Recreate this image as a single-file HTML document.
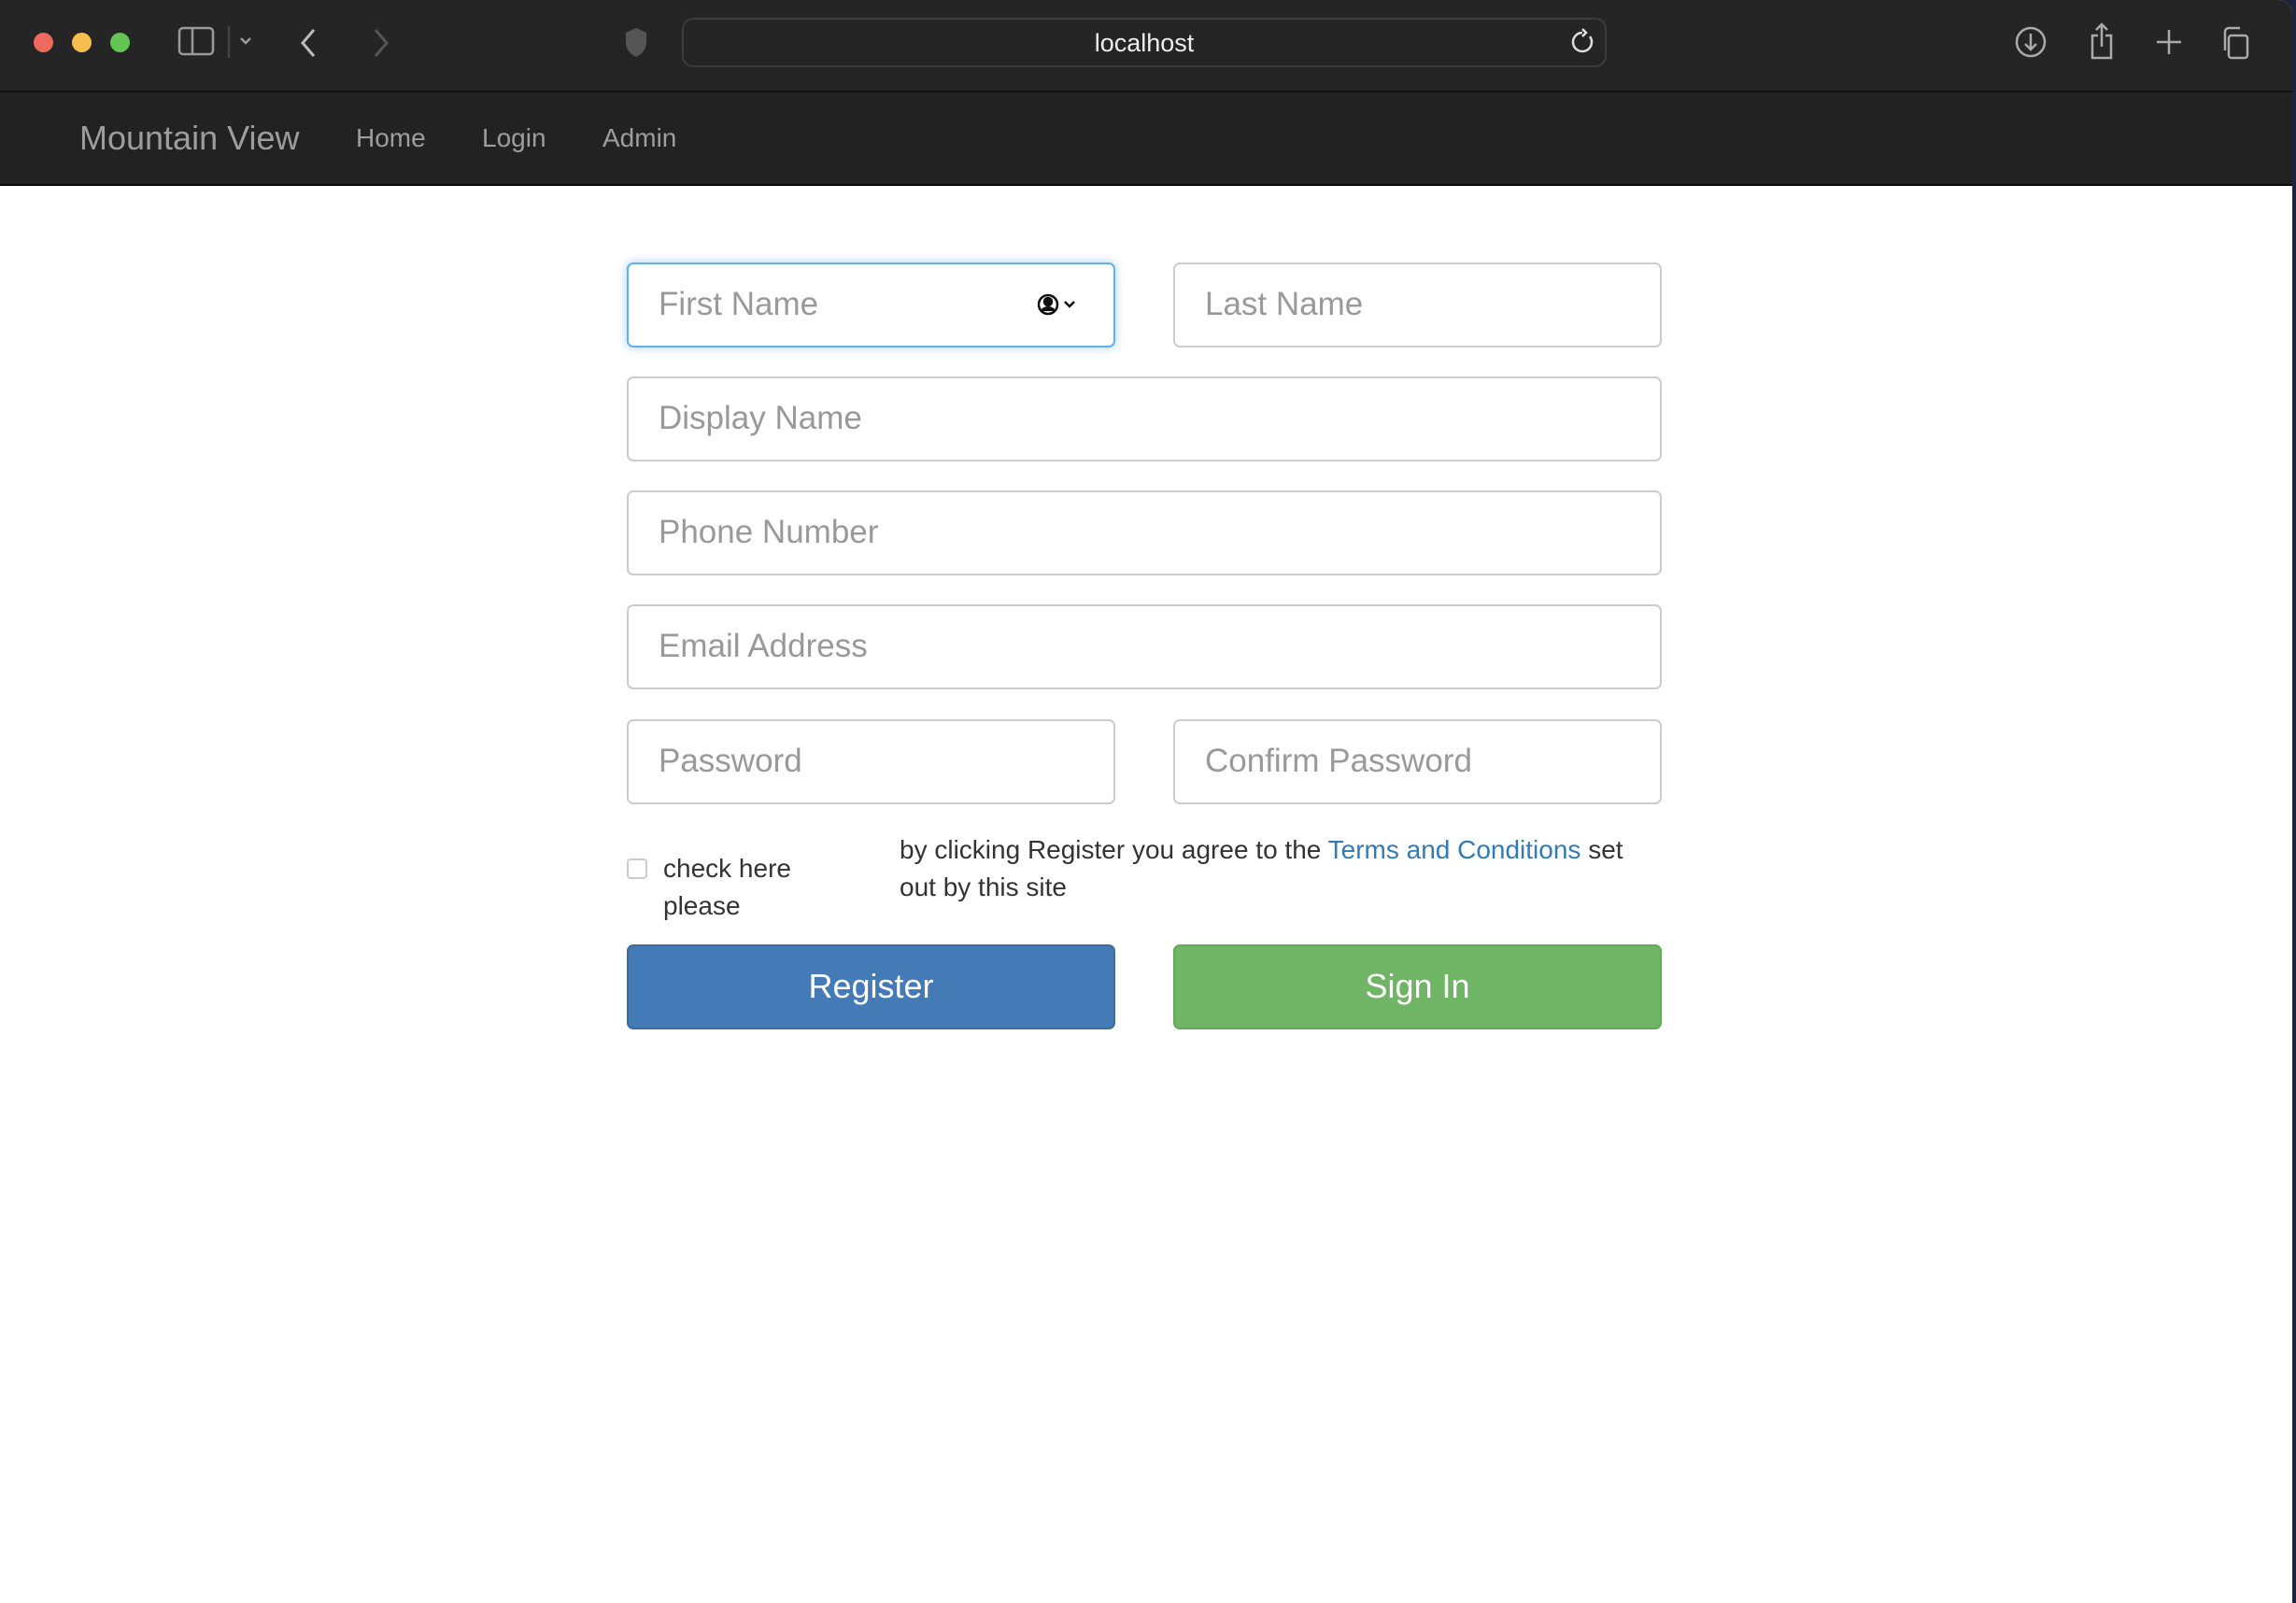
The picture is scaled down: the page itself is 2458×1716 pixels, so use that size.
<!DOCTYPE html>
<html><head><meta charset="utf-8"><style>
*{box-sizing:border-box;margin:0;padding:0}
body{width:2458px;height:1716px;overflow:hidden;background:#1b2540;font-family:"Liberation Sans",Arial,sans-serif;position:relative}
.win{position:absolute;left:0;top:0;width:2454px;height:1716px;background:#fff;overflow:hidden;border-top-right-radius:14px}
.tb{position:absolute;left:0;top:0;width:100%;height:99px;background:#252525;border-bottom:2px solid #111}
.dot{position:absolute;top:35px;width:21px;height:21px;border-radius:50%}
.url{position:absolute;left:730px;top:19px;width:990px;height:53px;border:2px solid #3c3c3c;border-radius:12px;color:#eee;font-size:27px;text-align:center;line-height:51px}
.nav{position:absolute;left:0;top:99px;width:100%;height:100px;background:#222;border-bottom:2px solid #080808}
.nav span{position:absolute;top:0;line-height:98px;color:#9d9d9d;font-size:28px}
.f{position:absolute;height:91px;border:2px solid #ccc;border-radius:7px;color:#999;font-size:35px;line-height:85px;padding-left:32px}
.btn{position:absolute;top:1011px;height:91px;width:523px;border-radius:7px;color:#fff;font-size:36px;text-align:center;line-height:85px}
.t{position:absolute;font-size:28px;color:#333;line-height:40px}
</style></head><body>
<div class="win">
<div class="tb">
<div class="dot" style="left:36px;background:#ee6a5f"></div>
<div class="dot" style="left:77px;background:#f5be4f"></div>
<div class="dot" style="left:118px;background:#62c554"></div>
<svg style="position:absolute;left:190px;top:28px" width="90" height="36" fill="none" stroke="#999" stroke-width="2.5"><rect x="2" y="2" width="36" height="28" rx="4"/><line x1="16" y1="2" x2="16" y2="30"/><line x1="55" y1="0" x2="55" y2="34" stroke="#444"/><path d="M68 13l5 5 5-5"/></svg>
<svg style="position:absolute;left:318px;top:28px" width="100" height="36" fill="none" stroke-width="3"><path d="M18 4L6 18l12 14" stroke="#bbb"/><path d="M84 4l12 14-12 14" stroke="#555"/></svg>
<svg style="position:absolute;left:666px;top:28px" width="30" height="36"><path d="M15 2L4 7v10c0 8 5 13 11 16 6-3 11-8 11-16V7z" fill="#555"/></svg>
<div class="url">localhost</div>
<svg style="position:absolute;left:1680px;top:30px" width="30" height="30" fill="none" stroke="#ddd" stroke-width="2.5"><path d="M22 9a10 10 0 1 1-8-4"/><path d="M14 1l4 4-4 4"/></svg>
<svg style="position:absolute;left:2150px;top:20px" width="260" height="50" fill="none" stroke="#aaa" stroke-width="2.5"><circle cx="24" cy="25" r="15"/><path d="M24 16v17M18 27l6 6 6-6"/><path d="M96 18h-6v24h20V18h-6M100 30V6M94 12l6-6 6 6"/><path d="M172 12v26M159 25h26"/><rect x="236" y="18" width="20" height="24" rx="3"/><path d="M232 34V14a4 4 0 0 1 4-4h12"/></svg>
</div>
<div class="nav">
<span style="left:85px;font-size:36px">Mountain View</span>
<span style="left:381px">Home</span>
<span style="left:516px">Login</span>
<span style="left:645px">Admin</span>
</div>
<div class="f" style="left:671px;top:281px;width:523px;border-color:#66afe9;box-shadow:0 0 10px rgba(102,175,233,.6)">First Name
<svg style="position:absolute;right:34px;top:30px" width="48" height="26" fill="none" stroke="#111" stroke-width="2.5"><circle cx="12" cy="13" r="10"/><circle cx="12" cy="10" r="4" fill="#111"/><path d="M5 20c3-5 11-5 14 0" fill="#111"/><path d="M30 10l5 5 5-5"/></svg></div>
<div class="f" style="left:1256px;top:281px;width:523px">Last Name</div>
<div class="f" style="left:671px;top:403px;width:1108px">Display Name</div>
<div class="f" style="left:671px;top:525px;width:1108px">Phone Number</div>
<div class="f" style="left:671px;top:647px;width:1108px">Email Address</div>
<div class="f" style="left:671px;top:770px;width:523px">Password</div>
<div class="f" style="left:1256px;top:770px;width:523px">Confirm Password</div>
<div style="position:absolute;left:671px;top:919px;width:22px;height:22px;border:2px solid #ccc;border-radius:4px"></div>
<div class="t" style="left:710px;top:910px">check here<br>please</div>
<div class="t" style="left:963px;top:890px">by clicking Register you agree to the <span style="color:#337ab7">Terms and Conditions</span> set<br>out by this site</div>
<div class="btn" style="left:671px;background:#447ab5;border:2px solid #3b6da3">Register</div>
<div class="btn" style="left:1256px;background:#70b565;border:2px solid #64a95a">Sign In</div>
</div>
</body></html>
